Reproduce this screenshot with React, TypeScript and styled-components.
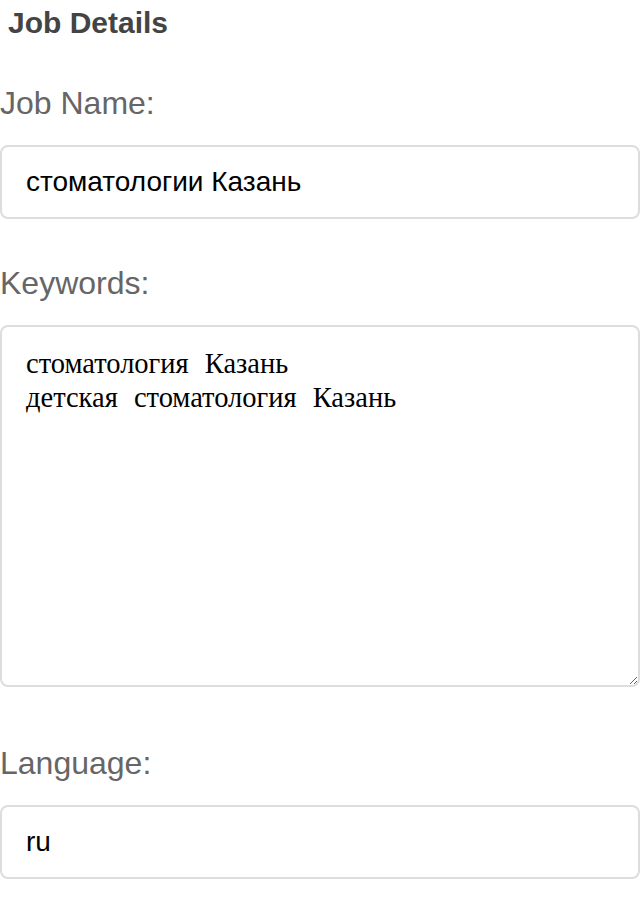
import React from "react";
import styled, { createGlobalStyle } from "styled-components";

const Global = createGlobalStyle`
  html, body { margin: 0; padding: 0; background: #fff; }
  body { font-family: "Liberation Sans", Arial, sans-serif; }
  * { box-sizing: border-box; }
`;

const Page = styled.div`
  display: flex;
  flex-direction: column;
  width: 640px;
`;

const Heading = styled.h3`
  margin: 6px 0 0 8px;
  font-family: "Liberation Sans", Arial, sans-serif;
  font-weight: 700;
  font-size: 30px;
  line-height: 34px;
  color: #444;
`;

const Field = styled.div<{ $top: number }>`
  display: flex;
  flex-direction: column;
  margin-top: ${(p) => p.$top}px;
`;

const Label = styled.label`
  display: block;
  font-size: 32px;
  line-height: 36px;
  color: #666;
  margin-bottom: 24px;
`;

const TextInput = styled.input`
  display: block;
  width: 100%;
  height: 74px;
  margin: 0;
  padding: 0 24px;
  border: 2px solid #ddd;
  border-radius: 8px;
  font-family: "Liberation Sans", Arial, sans-serif;
  font-size: 28px;
  color: #000;
  background: #fff;
  outline: none;
`;

const TextArea = styled.textarea`
  display: block;
  width: 100%;
  height: 362px;
  margin: 0;
  padding: 20px 24px;
  border: 2px solid #ddd;
  border-radius: 8px;
  font-family: "Liberation Serif", "Times New Roman", serif;
  font-size: 28.5px;
  line-height: 34px;
  word-spacing: 9px;
  color: #000;
  background: #fff;
  outline: none;
`;

export default function App() {
  return (
    <Page>
      <Global />
      <Heading>Job Details</Heading>
      <Field $top={45}>
        <Label htmlFor="jobname">Job Name:</Label>
        <TextInput id="jobname" defaultValue="стоматологии Казань" />
      </Field>
      <Field $top={46}>
        <Label htmlFor="keywords">Keywords:</Label>
        <TextArea
          id="keywords"
          defaultValue={"стоматология Казань\nдетская стоматология Казань"}
        />
      </Field>
      <Field $top={58}>
        <Label htmlFor="lang">Language:</Label>
        <TextInput id="lang" defaultValue="ru" />
      </Field>
    </Page>
  );
}
